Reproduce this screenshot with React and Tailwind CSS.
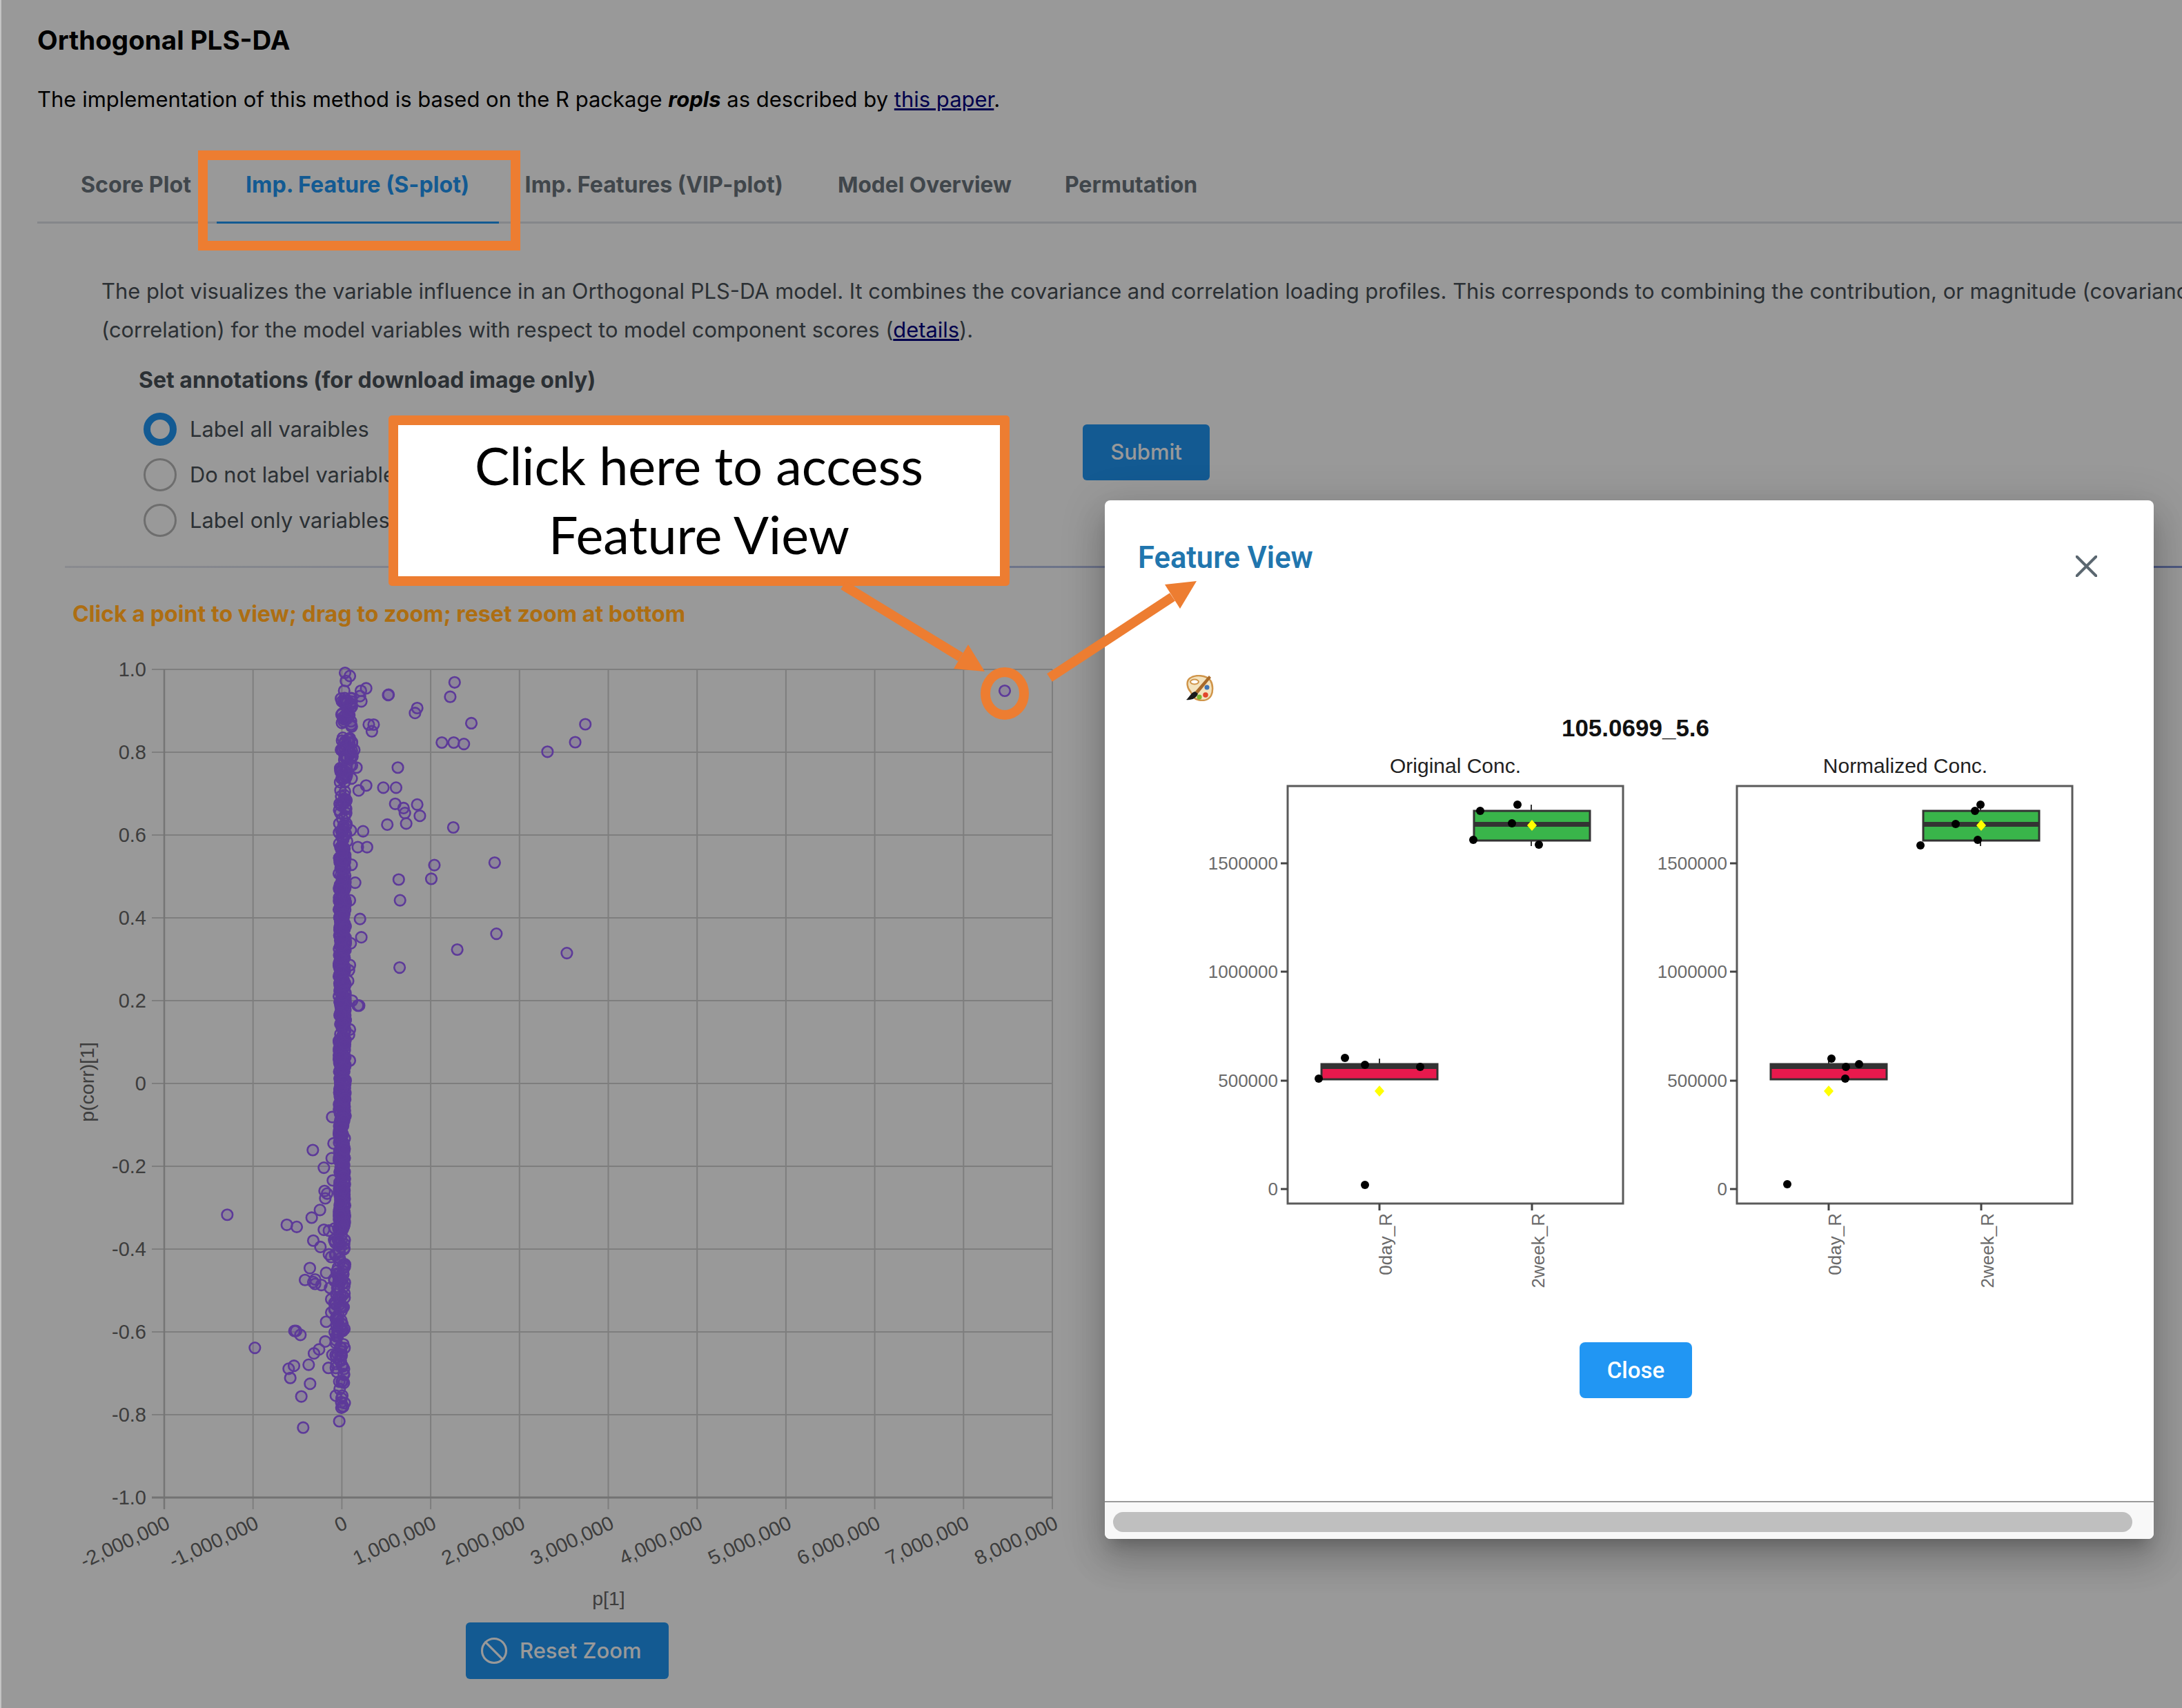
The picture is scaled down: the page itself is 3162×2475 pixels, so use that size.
import { Ban } from 'lucide-react';

const TABS = [
  { label: 'Score Plot', cls: 'text-[32.2px] px-[39.5px] border-transparent text-[#6c757d]' },
  { label: 'Imp. Feature (S-plot)', cls: 'text-[32.2px] -mx-[2px] pl-[41.5px] pr-[43px] border-[#2196f3] text-[#2196f3]' },
  { label: 'Imp. Features (VIP-plot)', cls: 'text-[32.2px] px-[39.5px] border-transparent text-[#6c757d]' },
  { label: 'Model Overview', cls: 'text-[31.7px] px-[39.5px] border-transparent text-[#6c757d]' },
  { label: 'Permutation', cls: 'text-[32px] -ml-[2px] px-[39.5px] border-transparent text-[#6c757d]' },
];

// outliers read off the reference, upper half (crop coords)
const UPPER = [[1033,174],[1023,215],[1071,290],[1330,293],[1307,344],[1244,371],[1004,345],[1031,345],[1054,349],[948,247],[943,261],[882,210],[883,209],[832,191],[820,198],[818,213],[821,228],[838,294],[849,294],[845,313],[904,416],[871,473],[900,473],[832,467],[815,481],[898,519],[917,531],[920,545],[948,521],[954,553],[923,575],[880,578],[1030,586],[825,597],[797,594],[813,642],[834,642],[987,693],[1124,686],[906,734],[980,732],[909,793],[818,846],[821,898],[1128,888],[1039,933],[1288,943],[908,984],[799,692],[807,743],[795,793],[797,915],[795,977],[793,992],[791,1022],[800,1078],[813,1092],[816,1092],[795,1160],[793,1175],[795,1248],[810,416],[799,447],[805,366],[784,147],[795,156],[786,170],[782,198]]
  .map(([x, y]) => [x / 1.568, 900 + y / 1.96]);

const LOWER = [[694,310],[610,435],[700,410],[692,466],[658,502],[697,550],[661,590],[672,600],[664,618],[641,662],[605,691],[238,680],[497,718],[540,726],[658,737],[680,740],[612,778],[643,802],[597,882],[668,900],[576,927],[620,925],[612,935],[620,942],[647,946],[685,957],[530,1120],[537,1120],[556,1135],[358,1184],[664,1160],[637,1190],[615,1205],[592,1248],[528,1252],[505,1263],[512,1298],[598,1320],[560,1368],[678,1260],[695,1210],[710,1365],[738,1365],[735,1375],[725,1462],[568,1486],[725,1312],[740,1310],[690,1050],[668,1085],[690,1000],[680,830],[690,840],[710,1260],[730,1210],[725,1230]]
  .map(([x, y]) => [250 + x / 3, 1500 + y / 2.613]);

// dense stem of points around zero
const makeStem = () => {
  let seed = 12345;
  const rnd = () => {
    seed = (seed * 16807) % 2147483647;
    return seed / 2147483647;
  };
  const bands = [
    [34, 1010, 1055, 494, 510],
    [34, 1068, 1110, 494, 512],
    [18, 1110, 1135, 492, 504],
    [40, 1145, 1225, 491, 503],
    [400, 1225, 1620, 491, 501],
    [180, 1620, 1780, 491, 500],
    [70, 1780, 1900, 484, 500],
    [28, 1900, 1960, 485, 500],
    [14, 1960, 2010, 486, 499],
    [6, 2010, 2040, 492, 500],
  ];
  const out = [];
  bands.forEach(([n, y0, y1, x0, x1]) => {
    for (let i = 0; i < n; i++) {
      out.push([x0 + rnd() * (x1 - x0), y0 + rnd() * (y1 - y0)]);
    }
  });
  return out;
};

const POINTS = [...makeStem(), ...UPPER, ...LOWER, [1456, 1001]];

const X_TICKS = ['-2,000,000', '-1,000,000', '0', '1,000,000', '2,000,000', '3,000,000', '4,000,000', '5,000,000', '6,000,000', '7,000,000', '8,000,000'];
const Y_TICKS = ['1.0', '0.8', '0.6', '0.4', '0.2', '0', '-0.2', '-0.4', '-0.6', '-0.8', '-1.0'];

const ScatterChart = () => (
  <svg viewBox="0 950 1600 1390" className="block w-[1600px] h-[1390px] mt-[38px]" style={{ fontFamily: '"Liberation Sans", sans-serif' }}>
    {X_TICKS.map((t, i) => {
      const x = 238 + i * 128.7;
      return (
        <g key={t}>
          <line x1={x} x2={x} y1={970} y2={2187} stroke="#d2d2d2" strokeWidth="2" />
          <text
            x={0}
            y={0}
            fontSize="29"
            fill="#666"
            textAnchor="end"
            transform={`translate(${x + 10} 2214) rotate(-25)`}
          >
            {t}
          </text>
        </g>
      );
    })}
    {Y_TICKS.map((t, i) => {
      const y = 970 + i * 120;
      return (
        <g key={t}>
          <line x1={220} x2={1525} y1={y} y2={y} stroke="#d2d2d2" strokeWidth="2" />
          <text x={212} y={y + 10} fontSize="29" fill="#666" textAnchor="end">{t}</text>
        </g>
      );
    })}
    <line x1={238} x2={238} y1={970} y2={2187} stroke="#c4c4c4" strokeWidth="2.5" />
    <line x1={220} x2={1525} y1={2170} y2={2170} stroke="#c0c0c0" strokeWidth="3" />
    {POINTS.map(([x, y], i) => (
      <circle key={i} cx={x} cy={y} r="7.8" fill="#9b61ff" fillOpacity="0.2" stroke="#9b61ff" strokeWidth="2.6" />
    ))}
    <text x={882} y={2326} fontSize="28.5" fill="#666" textAnchor="middle">p[1]</text>
    <text x={0} y={0} fontSize="28.5" fill="#666" textAnchor="middle" transform="translate(136 1568) rotate(-90)">p(corr)[1]</text>
  </svg>
);

const Dot = ({ x, y }) => <circle cx={x} cy={y} r="6" fill="#000" />;
const Diamond = ({ x, y }) => <path d={`M${x} ${y - 8}L${x + 7} ${y}L${x} ${y + 8}L${x - 7} ${y}Z`} fill="#ffff00" />;

const BoxPanel = ({ left, title, titleX, yTicks, dots }) => {
  const t0 = left + 133;
  const t1 = left + 354;
  return (
    <g>
      <text x={titleX} y={1120} fontSize="30" fill="#222" textAnchor="middle">{title}</text>
      <rect x={left} y={1139} width={486} height={605} fill="#fff" stroke="#5a5a5a" strokeWidth="3" />
      {yTicks.map(([label, y]) => (
        <g key={label}>
          <line x1={left - 10} x2={left} y1={y} y2={y} stroke="#444" strokeWidth="3" />
          <text x={left - 14} y={y + 9} fontSize="26" fill="#6a6a6a" textAnchor="end">{label}</text>
        </g>
      ))}
      {[[t0, '0day_R'], [t1, '2week_R']].map(([x, label]) => (
        <g key={label}>
          <line x1={x} x2={x} y1={1744} y2={1754} stroke="#444" strokeWidth="3" />
          <text x={0} y={0} fontSize="26" fill="#6a6a6a" textAnchor="end" transform={`translate(${x + 18} 1758) rotate(-90)`}>{label}</text>
        </g>
      ))}
      {/* red box */}
      <line x1={t0} x2={t0} y1={1534} y2={1541} stroke="#333" strokeWidth="2" />
      <rect x={t0 - 84} y={1542} width={168} height={22} fill="#e8194d" stroke="#333" strokeWidth="3" />
      <rect x={t0 - 84} y={1541} width={168} height={8} fill="#333" />
      {/* green box */}
      <line x1={t1 - 1} x2={t1 - 1} y1={1166} y2={1226} stroke="#333" strokeWidth="2" />
      <rect x={t1 - 84} y={1175} width={168} height={43} fill="#39b54a" stroke="#333" strokeWidth="3" />
      <rect x={t1 - 84} y={1191} width={168} height={7} fill="#333" />
      {dots.map(([x, y], i) => <Dot key={i} x={x} y={y} />)}
      <Diamond x={t0} y={1581} />
      <Diamond x={t1} y={1196} />
    </g>
  );
};

const TICKS = [['1500000', 1251], ['1000000', 1408], ['500000', 1566], ['0', 1723]];
const LEFT_DOTS = [[1911,1563],[1949,1533],[1978,1543],[2058,1546],[1978,1717],[2145,1175],[2199,1166],[2191,1193],[2135,1217],[2230,1224]];
const RIGHT_DOTS = [[2654,1534],[2675,1546],[2694,1542],[2674,1563],[2590,1716],[2870,1166],[2862,1175],[2834,1194],[2866,1217],[2783,1225]];

const PaletteIcon = () => (
  <svg viewBox="0 0 41 38" className="block w-[41px] h-[38px] ml-[117px] mt-[142px]">
    <path d="M6 5C14-1 30 0 36 8c4 6 4 16 1 22-4 7-12 8-19 6C10 34 10 28 7 24 3 20 0 10 6 5Z" fill="#f3e3bf" stroke="#d0954a" strokeWidth="2.5" />
    <ellipse cx="13" cy="10" rx="6" ry="3.5" fill="#fff" stroke="#d0954a" strokeWidth="2" />
    <circle cx="31" cy="18" r="3.5" fill="#3f74b5" />
    <circle cx="29" cy="29" r="3.8" fill="#e2452a" />
    <circle cx="20" cy="32" r="3.6" fill="#7db52e" />
    <path d="M34 1 L14 24 L18 27 L37 4 Z" fill="#a86a2a" />
    <path d="M14 24 C8 25 6 32 1 36 C8 37 16 34 18 27 Z" fill="#1a1a1a" />
  </svg>
);

const FeatureModal = () => (
  <div className="absolute left-[1601px] top-[725px] w-[1520px] h-[1505px] flex flex-col overflow-hidden rounded-lg bg-white shadow-[0_32px_48px_4px_rgba(0,0,0,0.14),0_12px_60px_10px_rgba(0,0,0,0.12),0_16px_20px_-10px_rgba(0,0,0,0.2)]">
    <div className="flex justify-between items-start pl-[48px] pr-[82px] pt-[59px]">
      <h2 className="text-[43.5px] leading-[50px] font-semibold text-[#2176ae] font-['Roboto',sans-serif]">Feature View</h2>
      <svg viewBox="0 0 31 31" className="w-[31px] h-[31px] mt-[21px]" fill="none" stroke="#5b6770" strokeWidth="4" strokeLinecap="round">
        <path d="M1.5 1.5l28 28M29.5 1.5l-28 28" />
      </svg>
    </div>
    <PaletteIcon />
    <svg viewBox="1601 1020 1520 850" className="block w-[1520px] h-[850px] mt-[4px] shrink-0" style={{ fontFamily: '"Liberation Sans", sans-serif' }}>
      <text x={2370} y={1067} fontSize="35" fontWeight="700" fill="#111" textAnchor="middle">105.0699_5.6</text>
      <BoxPanel left={1866} title="Original Conc." titleX={2109} yTicks={TICKS} dots={LEFT_DOTS} />
      <BoxPanel left={2517} title="Normalized Conc." titleX={2761} yTicks={TICKS} dots={RIGHT_DOTS} />
    </svg>
    <button className="w-[163px] h-[81px] ml-[688px] mt-[75px] shrink-0 rounded-lg bg-[#2196f3] text-white text-[33px] font-medium font-['Roboto',sans-serif]">Close</button>
    <div className="mt-auto h-[55px] border-t-2 border-[#9a9a9a] bg-[#f8f8f8] pt-[14px] pl-[12px] pr-[31px]">
      <div className="h-[29px] rounded-full bg-[#bfbfbf]" />
    </div>
  </div>
);

const Radio = ({ checked, label }) => (
  <div className="flex items-center h-[66px]">
    <span className={checked
      ? 'w-[48px] h-[48px] rounded-full border-[10px] border-[#2196f3] bg-white'
      : 'w-[48px] h-[48px] rounded-full border-[3px] border-[#b8b8b8] bg-white'} />
    <span className="ml-[19px] text-[30.8px] text-[#495057]">{label}</span>
  </div>
);

const Annotations = () => (
  <>
    <div className="absolute left-[287px] top-[218px] w-[467px] h-[145px] border-[14px] border-[#ed7d31]" />
    <div className="absolute left-[563px] top-[602px] w-[900px] h-[247px] rounded-[5px] border-[14px] border-[#ed7d31] bg-white flex flex-col items-center justify-center pb-[4px] text-[75.5px] leading-[100px] text-black font-['Lato',sans-serif]">
      <div>Click here to access</div>
      <div>Feature View</div>
    </div>
    <svg viewBox="0 0 3162 2475" className="absolute inset-0 w-[3162px] h-[2475px]">
      <ellipse cx="1456" cy="1005" rx="28" ry="31" fill="none" stroke="#ed7d31" strokeWidth="14" />
      <path d="M1222 848L1392 952" stroke="#ed7d31" strokeWidth="14" fill="none" />
      <path d="M1427 973L1382 969L1403 934Z" fill="#ed7d31" />
      <path d="M1521 982L1699 865" stroke="#ed7d31" strokeWidth="14" fill="none" />
      <path d="M1734 842L1688 847L1710 882Z" fill="#ed7d31" />
    </svg>
  </>
);

export default function App() {
  return (
    <div className="relative w-[3162px] h-[2475px] overflow-hidden bg-white text-black font-['Inter',sans-serif]">
      <h1 className="pl-[54px] pt-[36px] text-[38.5px] leading-[44px] font-bold">Orthogonal PLS-DA</h1>
      <p className="pl-[54px] mt-[41px] text-[31px] leading-[46px] whitespace-nowrap">
        The implementation of this method is based on the R package <b><i>ropls</i></b> as described by <a className="underline text-[#000080]">this paper</a>.
      </p>

      <div className="flex ml-[54px] mt-[44px] pl-[23.5px] border-b-[3px] border-[#dee2e6]">
        {TABS.map((t) => (
          <div key={t.label} className={`pt-[37px] pb-[33px] -mb-[3px] border-b-[3px] leading-[40px] font-bold ${t.cls}`}>
            {t.label}
          </div>
        ))}
      </div>

      <div className="pl-[147px] mt-[70px] text-[30.9px] leading-[56px] text-[#495057] whitespace-nowrap">
        <div>The plot visualizes the variable influence in an Orthogonal PLS-DA model. It combines the covariance and correlation loading profiles. This corresponds to combining the contribution, or magnitude (covariance), with the effect and reliability</div>
        <div>(correlation) for the model variables with respect to model component scores (<a className="underline text-[#000080]">details</a>).</div>
      </div>

      <div className="pl-[201px] mt-[23px] text-[32px] leading-[44px] font-bold text-[#495057]">Set annotations (for download image only)</div>

      <div className="flex items-start ml-[208px] mt-[16px]">
        <div className="w-[1361px]">
          <Radio checked label="Label all varaibles" />
          <Radio label="Do not label variables" />
          <Radio label="Label only variables of interest" />
        </div>
        <button className="w-[184px] h-[81px] mt-[26px] rounded-md bg-[#2196f3] text-white text-[31px] font-medium">Submit</button>
      </div>

      <div className="ml-[94px] mt-[33px] h-[3px] bg-linear-to-r from-[#e6e8ee] to-[#8194d8]" />

      <div className="relative z-10 pl-[105px] mt-[45px] text-[32.2px] leading-[44px] font-bold text-[#ad6e12]">Click a point to view; drag to zoom; reset zoom at bottom</div>

      <ScatterChart />

      <button className="flex items-center ml-[675px] mt-[11px] w-[294px] h-[82px] rounded-md bg-[#2196f3] text-white text-[31px] font-medium pl-[20px]">
        <Ban size={42} strokeWidth={1.8} />
        <span className="ml-[16px]">Reset Zoom</span>
      </button>

      {/* dimmed backdrop */}
      <div className="absolute inset-0 bg-black/40 border-l-2 border-[#c4c4c4]" />

      <FeatureModal />
      <Annotations />
    </div>
  );
}
